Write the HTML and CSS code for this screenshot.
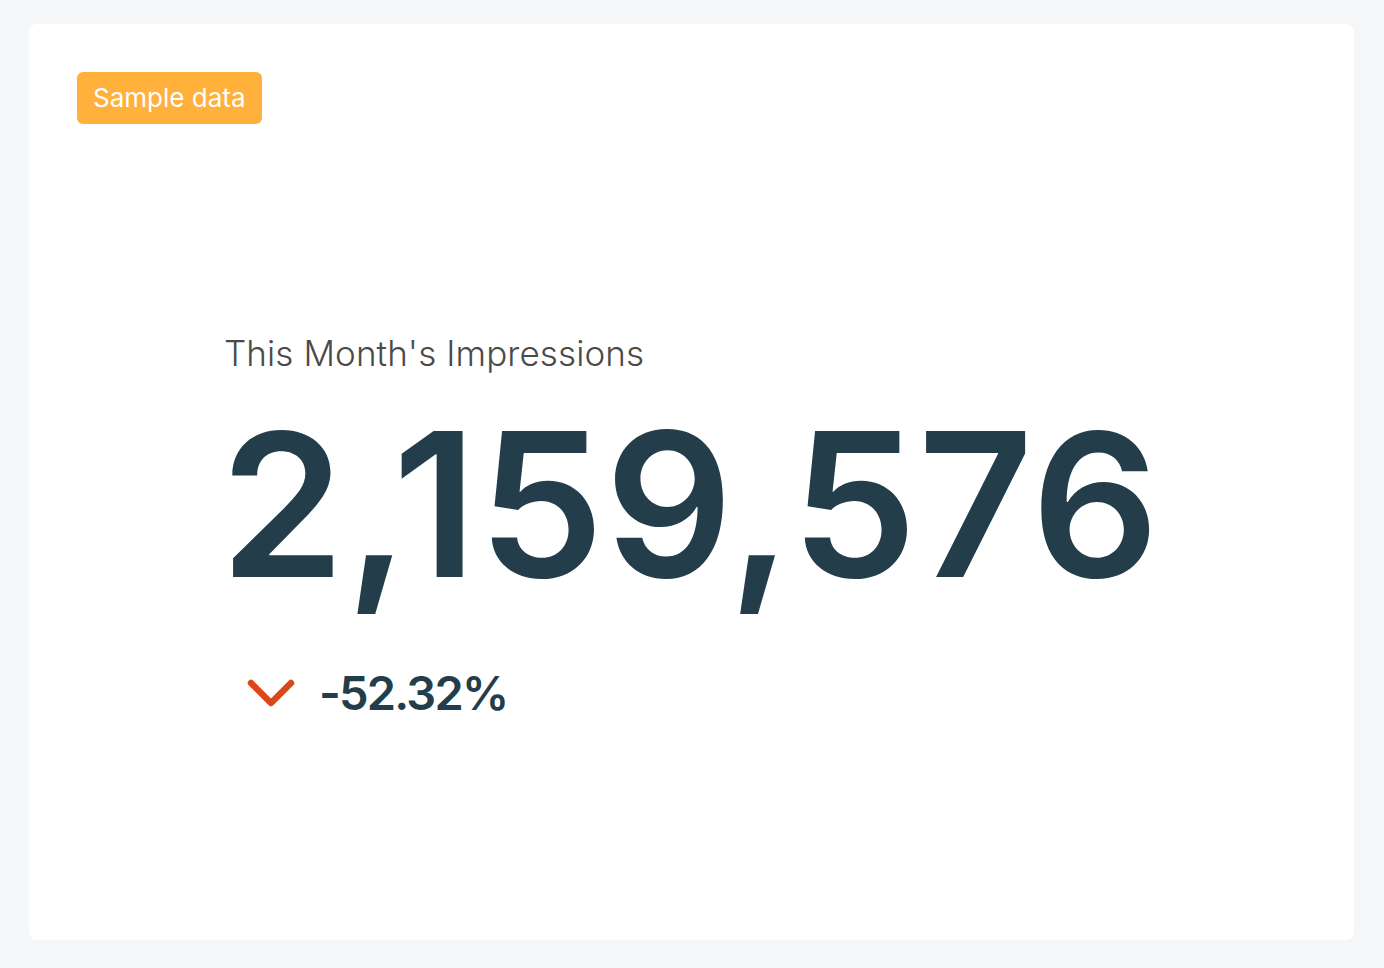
FILE: index.html
```html
<!DOCTYPE html>
<html lang="en">
<head>
    <meta charset="UTF-8">
    <meta name="viewport" content="width=device-width, initial-scale=1.0">
    <title>Impressions</title>
    <link rel="stylesheet" href="styles.css">
</head>
<body>
    <div class="card">
        <span class="badge">Sample data</span>
        <div class="metric">
            <div class="metric-title">This Month's Impressions</div>
            <div class="metric-value">2,159,576</div>
            <div class="metric-change">
                <svg class="chevron" width="48" height="28" viewBox="0 0 48 28">
                    <path d="M4 4 L24 24 L44 4" fill="none" stroke="#dc4718" stroke-width="6.5" stroke-linecap="round" stroke-linejoin="round"/>
                </svg>
                <span class="change-value">-52.32%</span>
            </div>
        </div>
    </div>
</body>
</html>
```

FILE: styles.css
```css
body {
    margin: 0;
    padding: 24px 30px 28px 29px;
    background-color: #f5f6f8;
    font-family: Inter, "Noto Sans", sans-serif;
}
.card {
    background-color: white;
    border-radius: 8px;
    height: 916px;
    box-sizing: border-box;
    padding: 48px;
}
.badge {
    display: inline-block;
    background-color: #ffb13b;
    color: white;
    font-size: 26px;
    line-height: 52px;
    padding: 0 16px;
    border-radius: 6px;
}
.metric {
    margin-left: 147px;
    margin-top: 207px;
}
.metric-title {
    font-size: 35px;
    color: #4a4a4a;
    font-weight: 300;
    line-height: 44px;
    letter-spacing: 0.1px;
}
.metric-value {
    font-size: 200px;
    font-weight: 600;
    color: #233d4a;
    line-height: 220px;
    margin-top: 19px;
    margin-left: -4px;
    letter-spacing: 1px;
}
.metric-change {
    display: flex;
    align-items: center;
    gap: 24px;
    margin-left: 23px;
    margin-top: 50px;
}
.change-value {
    font-size: 47px;
    font-weight: 600;
    color: #233d4a;
    letter-spacing: -1.8px;
}
```
